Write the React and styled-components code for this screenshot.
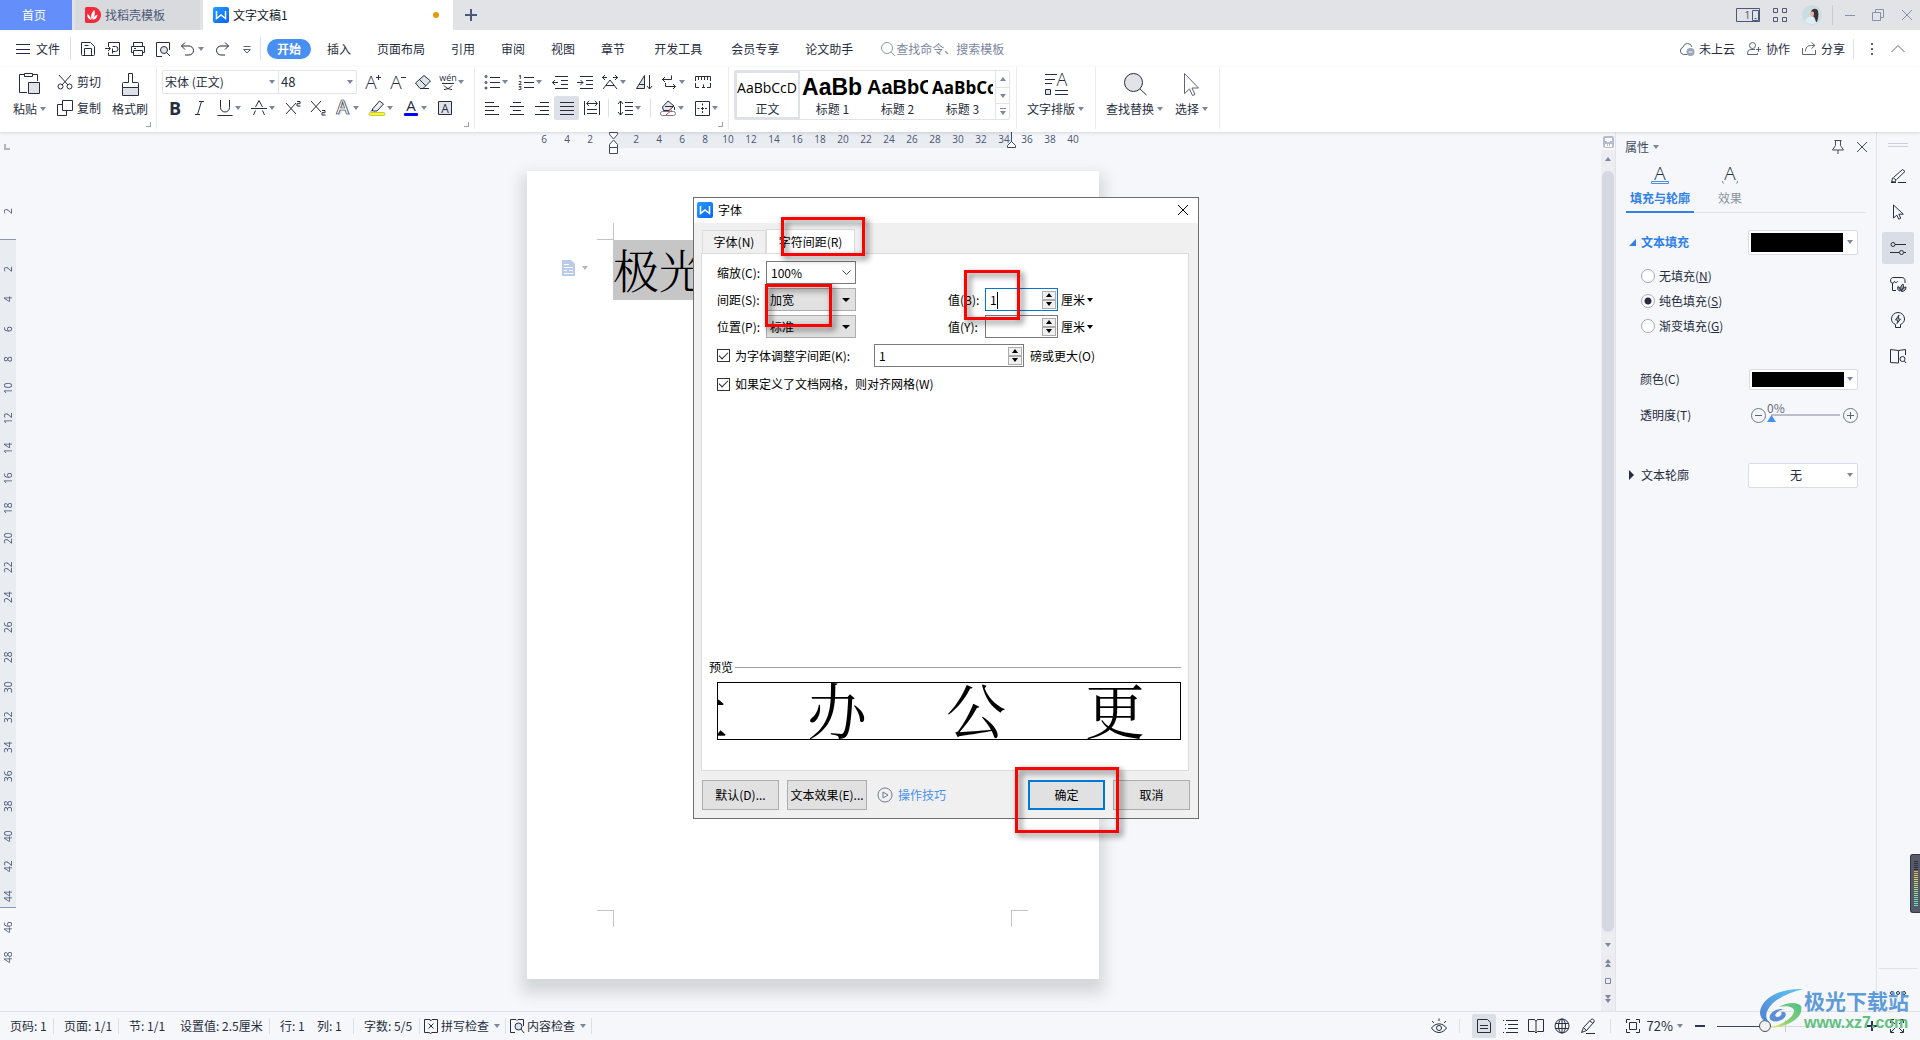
import { useState } from "react";
import styled, { createGlobalStyle, css } from "styled-components";

const FONT = '"Noto Sans CJK SC", "Noto Sans", sans-serif';
const INK = "#262d40";
const LINE = "#e1e3e9";
const BLUE = "#2f80e7";

const GlobalStyle = createGlobalStyle`
  * { box-sizing: border-box; }
  body {
    margin: 0;
    overflow: hidden;
    font: 12px/16px ${FONT};
    color: ${INK};
    background: #f5f7fa;
  }
  button, input, select {
    font: inherit;
    color: inherit;
    margin: 0;
    padding: 0;
    border: 0;
    outline: 0;
    background: none;
    border-radius: 0;
  }
  select { appearance: none; }
  button { white-space: nowrap; cursor: pointer; }
  svg { display: block; flex: none; overflow: visible; }
`;

/* ---------- icons ---------- */

const A = ({ x = 8, y = 13, size = 16, weight = 300, children = "A", ...rest }) => (
  <text x={x} y={y} fontSize={size} fontWeight={weight} fontFamily="Open Sans, Noto Sans, sans-serif" textAnchor="middle" fill="currentColor" stroke="none" {...rest}>
    {children}
  </text>
);

const icons = {
  menu: <path d="M1 3.500h14M1 8.500h14M1 12.500h14" />,
  save: <path d="M1.500 13.500v-12h9l4 4v8a1 1 0 0 1-1 1h-11a1 1 0 0 1-1-1zM4.500 14.500v-7h7v7M4.500 4.500h4" />,
  pdf: <path d="M3.500 5v-3.500h11v13h-11v-3M0 7.500h5M3 5l2.500 2.500L3 10M7.500 12.500v-5M7.500 10.500h3a2.500 2.500 0 0 0 0-5h-3" />,
  print: <path d="M3.500 5.500v-4h9v4M3.500 11.500h-2v-6h13v6h-2M3.500 9.500h9v5h-9zM4 7.500h2" />,
  preview: (
    <>
      <path d="M7 15.500H1.500v-14h13V9" />
      <circle cx="9" cy="9" r="3.500" fill="#dfe2e8" />
      <path d="M11.500 11.500l3.500 3.500" />
    </>
  ),
  undo: <path d="M5 1.500L1.500 5 5 8.500M1.500 5h7.500a4.500 4.500 0 0 1 0 9H5" />,
  redo: <path d="M11 1.500L14.500 5 11 8.500M14.500 5H7a4.500 4.500 0 0 0 0 9h4" />,
  more: <path d="M4.500 5.500h7M4.500 8.500L8 12l3.500-3.500z" stroke="#5d6476" />,
  search: (
    <g stroke="#8d97ab">
      <circle cx="7" cy="7" r="5.500" />
      <path d="M11 11l4 4" />
    </g>
  ),
  cloud: (
    <>
      <path d="M8 13.500H4.500a3.700 3.700 0 0 1-.5-7.200 4.600 4.600 0 0 1 9-.3" stroke="#5d6476" />
      <circle cx="11.500" cy="11" r="4" fill="#9aa4b8" stroke="none" />
      <path d="M9.500 11h4" stroke="#fff" />
    </>
  ),
  user: (
    <g stroke="#5d6476">
      <circle cx="6.500" cy="4.500" r="3" />
      <path d="M9 8.500H5a3.500 3.500 0 0 0-3.500 3.500v1.500h10V12M10 8.500h5M12.500 6v5" />
    </g>
  ),
  share: <path d="M1.500 7v6.500h13V9M4.500 10.500c0-4 2-6 6-6h3M10.500 1.500l3.500 3-3.500 3" stroke="#5d6476" />,
  dots: <path d="M8 2v2M8 7v2M8 12v2" strokeWidth="2" stroke="#5d6476" />,
  chevronUp: <path d="M1.500 11L8 4.500l6.500 6.500" stroke="#5d6476" />,
  paste: (
    <>
      <path d="M6 2.500H1.500v18H9M15 2.500h4.500V9" />
      <path d="M6.500 1.500h8v3h-8z" />
      <path d="M10.500 10.500h11v11h-11z" fill="#e1e3e8" />
    </>
  ),
  cut: (
    <>
      <path d="M2 1l9 10M14 1L5 11" />
      <circle cx="3.500" cy="12.500" r="2.500" />
      <circle cx="12.500" cy="12.500" r="2.500" />
    </>
  ),
  copy: <path d="M5.500 .5h10v10h-10zM5.500 4.500h-5v11h9v-5" />,
  brush: (
    <>
      <path d="M10.500 1.500h4v9h5a1 1 0 0 1 1 1v4h-16v-4a1 1 0 0 1 1-1h5z" fill="#fff" />
      <path d="M4.500 15.500h16v8h-16z" fill="#dfe1e6" />
    </>
  ),
  fontUp: (
    <>
      <A x={6} y={15} size={19} />
      <path d="M11 3.500h5M13.500 1v5" />
    </>
  ),
  fontDown: (
    <>
      <A x={6} y={15} size={19} />
      <path d="M11 3.500h5" />
    </>
  ),
  eraser: <path d="M.5 9L9 1.500 15.500 7 8 14.500H5zM4.500 5.500L11 12M5 14.500h9" fill="#dfe2e7" />,
  wen: (
    <>
      <A x={8} y={7} size={9} weight={400}>wén</A>
      <path d="M2 9.500h12M4 11.500c2 3 6 4 8 4M12 11.500c-2 3-6 4-8 4" />
    </>
  ),
  bold: <A size={18} y={15} weight={700}>B</A>,
  italic: <path d="M7 1.500h5M3 14.500h5M9.500 1.500l-4 13" />,
  underline: <path d="M3.500 0v7.500a4.500 4.500 0 0 0 9 0V0M.5 15.500h15" />,
  strike: <path d="M4.500 7L8 .5l3.500 6.500M2.500 15l2-4.500M13.500 15l-2-4.500M0 8.500h16" />,
  sup: <path d="M1 3l10 11M11 3L1 14M12 1.500h3v2.200h-3v2.300h3.500" />,
  sub: <path d="M1 1l10 11M11 1L1 12M12 10.500h3v2.200h-3v2.300h3.500" />,
  effect: (
    <>
      <A y={15} x={9} size={19} weight={600} fill="#d4d7de" />
      <A y={14} x={7.500} size={19} weight={600} fill="#fff" stroke="currentColor" strokeWidth=".7" />
    </>
  ),
  highlight: (
    <>
      <path d="M3.500 9L10.500 1l4 3-6.500 7H3.500zM2 11.500L4 9" fill="#eceef2" />
      <rect x="0" y="12.500" width="16" height="3" rx="1.500" fill="#ffff00" stroke="#8a8a4a" strokeWidth=".5" />
    </>
  ),
  fontColor: (
    <>
      <A y={11} size={15} weight={400} />
      <rect x="1" y="13" width="14" height="3" rx="1" fill="#0000ff" stroke="none" />
    </>
  ),
  shade: (
    <>
      <path d="M1.500 1.500h13v13h-13z" fill="#dfe2e7" />
      <A y={12.500} size={12} weight={400} />
    </>
  ),
  bullets: (
    <>
      <path d="M6 3.500h10M6 8.500h10M6 13.500h10" />
      <circle cx="2" cy="2.500" r="1" />
      <circle cx="2" cy="8.500" r="1" />
      <circle cx="2" cy="14" r="1" />
    </>
  ),
  numbers: (
    <>
      <path d="M6 3.500h10M6 8.500h10M6 13.500h10" />
      <A x={2} y={5} size={6} weight={700}>1</A>
      <A x={2} y={11} size={6} weight={700}>2</A>
      <A x={2} y={16} size={6} weight={700}>3</A>
    </>
  ),
  outdent: <path d="M3 2.500h13M9 6.500h7M9 10.500h7M3 14.500h13M0 8.500h6M3 6L.5 8.500 3 11" />,
  indent: <path d="M3 2.500h13M9 6.500h7M9 10.500h7M3 14.500h13M0 8.500h6M3.500 6L6 8.500 3.500 11" />,
  textWidth: <path d="M1 15L8 6l7 9M4 11.500h8M0 3.500h5M11 3.500h5M3 1L.5 3.500 3 6M13 1l2.500 2.500L13 6" />,
  sort: (
    <>
      <path d="M.5 14.500L8.500 1.500v13zM3 10.500h5.500" fill="#dfe2e7" />
      <path d="M13.500 1v14M11 12l2.500 3L16 12" />
    </>
  ),
  wrap: <path d="M10.500 1.500v4H1M4 3L1.500 5.500 4 8M4.500 9v3.500h10M12 10l2.500 2.500L12 15" />,
  tabRuler: <path d="M.5 7V2.500h15V7M3.500 3v3M6.500 3v3M9.500 3v3M12.500 3v3M.5 9v4.500H4M15.500 9v4.500H12M7 13.500h3M8.500 10.500v3" />,
  left: <path d="M1 2.500h9M1 6.500h14M1 10.500h9M1 14.500h14" />,
  center: <path d="M4 2.500h8M1 6.500h14M4 10.500h8M1 14.500h14" />,
  right: <path d="M6 2.500h9M1 6.500h14M6 10.500h9M1 14.500h14" />,
  justify: <path d="M1 2.500h14M1 6.500h14M1 10.500h14M1 14.500h14" />,
  distribute: <path d="M.5 1v14M15.500 1v14M3 3.500h10M5 1L2.500 3.500 5 6M11 1l2.500 2.500L11 6M3 9.500h10M3 13.500h10" />,
  spacing: <path d="M8 2.500h8M8 6.500h8M8 10.500h8M8 14.500h8M3.500 1v14M1 4l2.500-3L6 4M1 12l2.500 3L6 12" />,
  fill: (
    <>
      <path d="M2.500 7L8 1l6 5-5 4.500H3.500zM5 6.500h8" fill="#e4e6ea" />
      <path d="M14.500 7v3" />
      <path d="M.5 14a2 2 0 0 1 2-2.500h11a2 2 0 0 1 0 4h-11a2 2 0 0 1-2-1.500z" stroke="#777c88" />
      <path d="M6 15l6-5" stroke="#e04848" />
    </>
  ),
  border: <path d="M1.500 1.500h14v14h-14zM8.500 3.500v2M8.500 7v3M8.500 11v2M3.500 8.500h2M7 8.500h3M11 8.500h2" />,
  layout: (
    <>
      <path d="M1 2.500h12M1 7.500h10M1 11.500h7M11 18.500h13M11 22.500h13" />
      <path d="M1.500 17.500h5v5h-5z" fill="#e4e6ea" />
      <A x={18} y={14} size={18} />
    </>
  ),
  find: (
    <>
      <circle cx="10.500" cy="10.500" r="9" fill="#e1e3e6" />
      <path d="M17 17l6.500 6" />
    </>
  ),
  pointer: <path d="M4.500 1.500v20l5-4.500 3 6.500 2.500-1-3-6.500h6.500z" stroke="#5d6476" />,
  cursor: <path d="M3.500 1v13l3.300-2.800 2 4 2-1-2-4h4.500z" />,
  screens: (
    <>
      <path d="M.5 1.500h23v13H.5zM16.500 3.500v10h6v-10z" />
      <A x={11.500} y={12} size={11} weight={400}>1</A>
      <path d="M18.500 11.500h2" />
    </>
  ),
  grid: <path d="M1.500 1.500h4v4h-4zM10.500 1.500h4v4h-4zM1.500 10.500h4v4h-4zM10.500 10.500h4v4h-4z" />,
  min: <path d="M3 8.500h10" />,
  restore: <path d="M2.500 5.500h8v8h-8zM5.500 5.500v-3h8v8h-3" />,
  close: <path d="M3 3l10 10M13 3L3 13" />,
  pin: <path d="M4.500 1.500h7M5.500 1.500v5l-3 4.500h11l-3-4.500v-5M8 11v4" />,
  fillTab: (
    <>
      <A y={14} x={9} size={19} />
      <path d="M.5 15.500h17v2h-17z" stroke="#4a90e2" />
    </>
  ),
  effectTab: (
    <>
      <A y={14} x={9} size={19} />
      <path d="M1.500 15v1l1 1.500M16.500 15v1l-1 1.500" stroke="#4a90e2" />
    </>
  ),
  pen: <path d="M1.500 13.500l1.500-4 3 2.500-1 2zM4 9l8.500-7.500 2.500 2L6.500 11.500M8 14.500h8M1 14.500h5" />,
  edit: <path d="M1.500 14.500l2-5L11 1.500a2 2 0 0 1 3 2.500L6.500 12.500zM3.500 9.500l3 3M10 3l3 2.500M6 15.500h9" />,
  settings: (
    <>
      <path d="M5 4.500h11M0 12.500h9M14 12.500h2" />
      <circle cx="3" cy="4.500" r="2" />
      <circle cx="11.500" cy="12.500" r="2" />
    </>
  ),
  store: (
    <>
      <path d="M2.500 7v7.500H6M2.500 7a2 2 0 0 1-2-2C.5 2.500 1.500 1.500 4 1.500h7c3 0 4 1 4 3.500v2M2.500 7c1.500 0 2-1 2-2 0 2 3 2 3 0" />
      <path d="M10 15c-2-.5-3-2-2-4.500 1.500.5 2.500 2 2 4.500zM11 15c-1-3 0-6 2-7 1 2 .5 5-2 7zM11.500 15.500c0-3 2-4 4.500-4.500 0 3-2 4.500-4.500 4.500z" fill={INK} fillOpacity=".35" />
    </>
  ),
  bulb: <path d="M5.500 12.500c-2.500-1-4-3-4-5.500a6.500 6.500 0 0 1 13 0c0 2.500-1.500 4.500-4 5.500v3h-5zM9 3L5.500 8H8l-1 3.500L10.500 7H8z" />,
  bookSearch: (
    <>
      <path d="M8.500 2.500L.5 1.500v13l8 .5V2.500l7-1V7" />
      <circle cx="12.500" cy="11" r="2.500" />
      <path d="M14.500 13l1.500 2" />
    </>
  ),
  spell: <path d="M7 1.500H1.500v13H6l1.500 1 1.500-1h5.500v-13H9L7.500 3zM5.500 5.500l5 5M10.500 5.500l-5 5" />,
  content: (
    <>
      <path d="M6 14.500H1.500v-13H7l1 1 1-1h5.500V8" />
      <circle cx="9.500" cy="8.500" r="3.500" fill="#dfe2e8" />
      <path d="M12 11l3 4" />
    </>
  ),
  eye: (
    <>
      <path d="M.5 10c4-5.500 11-5.500 15 0-4 6-11 6-15 0zM1 3l2 2M8 .5V3M15 3l-2 2" />
      <circle cx="8" cy="10" r="2.500" />
    </>
  ),
  pageView: <path d="M1.500 1.500h10l3 3v10h-13zM4 7.500h8M4 10.500h8" />,
  outline: <path d="M4 2.500h12M6 6.500h10M6 10.500h10M4 14.500h12M1 2.500h1M3 6.500h1M3 10.500h1M1 14.500h1" />,
  book: <path d="M8 3.500l-1.500-2h-6v12h6l1.500 1.500 1.500-1.500h6v-12h-6zM8 3.500V15" />,
  globe: (
    <>
      <circle cx="8" cy="8" r="7" />
      <ellipse cx="8" cy="8" rx="3.500" ry="7" />
      <path d="M8 1v14M1.500 5.500h13M1.500 10.500h13" />
    </>
  ),
  fit: <path d="M1.500 5V1.500H5M11 1.500h3.500V5M14.500 11v3.500H11M5 14.500H1.500V11M4.500 4.500h7v7h-7z" />,
  full: <path d="M1.500 5V1.500H5M11 1.500h3.500V5M14.500 11v3.500H11M5 14.500H1.500V11M2 2l4 4M14 2l-4 4M14 14l-4-4M2 14l4-4" />,
  moreDots: (
    <>
      <circle cx="2" cy="8" r="1.500" />
      <circle cx="8" cy="8" r="1.500" />
      <circle cx="14" cy="8" r="1.500" />
    </>
  ),
  play: <path d="M8 1a7 7 0 1 0 .01 0zM6 5v6l5-3z" />,
  rulerToggle: (
    <>
      <rect x="0" y="0" width="11" height="12" rx="2" fill="#b4bccd" stroke="none" />
      <path d="M2 2h7v3H7v1H4V5H2zM2 8h2v2h1V8h1v2h1V8h2v3H2z" fill="#fff" stroke="none" />
    </>
  ),
};

const Icon = ({ name, w = 16, h = 16, color }) => (
  <svg width={w} height={h} viewBox={`0 0 ${w} ${h}`} fill="none" stroke="currentColor" color={color} aria-hidden="true">
    {icons[name]}
  </svg>
);

const Caret = ({ color = "#7c86a0", up }) => (
  <svg width="6" height="4" viewBox="0 0 6 4" fill={color} aria-hidden="true">
    <path d={up ? "M0 4h6L3 0z" : "M0 0h6L3 4z"} />
  </svg>
);

const WpsLogo = () => (
  <svg width="16" height="16" viewBox="0 0 16 16" aria-hidden="true">
    <defs>
      <linearGradient id="wps" x1="0" y1="0" x2="1" y2="1">
        <stop offset="0" stopColor="#22a0ff" />
        <stop offset="1" stopColor="#0a62f5" />
      </linearGradient>
    </defs>
    <rect width="16" height="16" rx="2" fill="url(#wps)" />
    <path d="M3.500 4v7.500L8 8l4.500 3.500V4" fill="none" stroke="#fff" strokeWidth="1.500" />
  </svg>
);

const DocerLogo = () => (
  <svg width="16" height="16" viewBox="0 0 16 16" aria-hidden="true">
    <path d="M1.500 0H8a8 8 0 0 1 0 16H1.500A1.500 1.500 0 0 1 0 14.500v-13A1.500 1.500 0 0 1 1.500 0z" fill="#f5293a" />
    <path d="M6 13C2.500 11.500 2 9 2.500 7c2 1 3.300 3 3.500 6zM6.500 12.500c-1-4 .3-7.500 3-9.500 1 4 0 7.500-3 9.500zM7.500 13c.5-2.500 2-4.500 5-5.500 0 3-2 5-5 5.500z" fill="#fff" />
  </svg>
);

/* ---------- frame ---------- */

const Screen = styled.div`
  position: relative;
  display: flex;
  flex-direction: column;
  height: 100vh;
`;

const TitleBar = styled.header`
  display: flex;
  align-items: center;
  height: 30px;
  background: #e1e3e6;
  color: #4c5876;
`;

const DocTab = styled.button`
  display: flex;
  align-items: center;
  gap: 4px;
  width: ${(p) => p.$w}px;
  height: 30px;
  margin-right: 3px;
  padding: 0 14px 0 10px;
  background: ${(p) => p.$bg};
  color: ${(p) => p.$color};
  ${(p) => p.$center && css`justify-content: center; padding: 0 4px 0 0;`}
`;

const Dot = styled.span`
  width: 6px;
  height: 6px;
  margin-left: auto;
  border-radius: 50%;
  background: #e69a05;
`;

const PlusButton = styled.button`
  width: 30px;
  height: 30px;
  display: grid;
  place-items: center;
`;

const WindowTools = styled.div`
  display: flex;
  align-items: center;
  margin-left: auto;
`;

const WinButton = styled.button`
  display: grid;
  place-items: center;
  width: ${(p) => p.$w || 30}px;
  height: 30px;
`;

const VSep = styled.span`
  flex: none;
  width: 1px;
  height: ${(p) => p.$h || 20}px;
  margin: 0 ${(p) => p.$r ?? 0}px 0 ${(p) => p.$l ?? 0}px;
  background: ${(p) => p.$color || "#dcdfe5"};
`;

const MenuBar = styled.nav`
  display: flex;
  align-items: center;
  height: 37px;
  padding-left: 15px;
  background: #fff;
`;

const FileButton = styled.button`
  display: flex;
  align-items: center;
  gap: 5px;
`;

const MenuTab = styled.button`
  height: 20px;
  margin-right: 6px;
  padding: 0 ${(p) => p.$pad || 10}px;
  border-radius: 10px;
  ${(p) =>
    p.$active &&
    css`
      background: #478ff2;
      color: #fff;
      font-weight: 700;
    `}
`;

const SearchBox = styled.label`
  display: flex;
  align-items: center;
  margin-left: 11px;
  input { width: 120px; }
  input::placeholder { color: #7b869f; opacity: 1; }
`;

const MenuRight = styled.div`
  display: flex;
  align-items: center;
  margin-left: auto;
  padding-right: 14px;
`;

const CloudButton = styled.button`
  display: flex;
  align-items: center;
  gap: 4px;
  margin-right: ${(p) => p.$r || 11}px;
`;

const MenuDots = styled.button`
  margin: 0 10px;
`;

/* ---------- ribbon ---------- */

const Ribbon = styled.section`
  position: relative;
  z-index: 1;
  display: flex;
  height: 65px;
  background: #fff;
  box-shadow: 0 1px 3px rgba(40, 50, 70, 0.16);
`;

const Group = styled.div`
  position: relative;
  display: flex;
  gap: ${(p) => p.$gap || 0}px;
  height: 62px;
  padding: 3px ${(p) => p.$r ?? 5}px 0 ${(p) => p.$l ?? 5}px;
  border-right: 1px solid #ebecef;
`;

const Launcher = styled.span`
  position: absolute;
  right: 5px;
  bottom: 2px;
  width: 5px;
  height: 5px;
  border: solid #9aa3b5;
  border-width: 0 1px 1px 0;
`;

const Stack = styled.div`
  display: flex;
  flex-direction: column;
  gap: 2px;
`;

const Row = styled.div`
  display: flex;
  align-items: center;
  height: 24px;
`;

const ToolButton = styled.button`
  display: flex;
  align-items: center;
  width: ${(p) => (p.$caret ? 34 : 25)}px;
  height: 24px;
  padding-left: 5px;
  gap: 2px;
  border-radius: 2px;
  background: ${(p) => (p.$active ? "#dde1e7" : "none")};
`;

const LabelTool = styled.button`
  display: flex;
  align-items: center;
  gap: 4px;
  height: 24px;
`;

const BigTool = styled.button`
  display: flex;
  flex-direction: column;
  align-items: center;
  gap: 5px;
  padding-top: 2px;
  height: 52px;
  span { display: flex; align-items: center; gap: 3px; }
`;

const ComboPair = styled.div`
  display: flex;
  height: 24px;
  margin-right: 3px;
  border: 1px solid ${LINE};
  border-radius: 2px;
`;

const Combo = styled.span`
  display: grid;
  align-items: center;
  width: ${(p) => p.$w}px;
  & + & { border-left: 1px solid ${LINE}; }
  select {
    grid-area: 1 / 1;
    width: 100%;
    height: 22px;
    padding-left: 2px;
    font-size: ${(p) => p.$size || 12}px;
  }
  svg {
    grid-area: 1 / 1;
    justify-self: end;
    margin-right: 3px;
    pointer-events: none;
  }
`;

const StyleBox = styled.div`
  display: flex;
  height: 50px;
  border: 1px solid ${LINE};
  border-radius: 2px;
`;

const StyleCard = styled.button`
  display: flex;
  flex-direction: column;
  align-items: center;
  justify-content: space-between;
  width: 65px;
  padding: 2px;
  overflow: hidden;
  box-shadow: ${(p) => (p.$active ? "inset 0 0 0 2px #dfe1e8" : "none")};
  b {
    width: 100%;
    height: 29px;
    overflow: hidden;
    text-align: left;
    font: ${(p) => p.$bold} ${(p) => p.$size}px/29px ${(p) => p.$face}, sans-serif;
    color: #000;
  }
`;

const StyleScroll = styled.div`
  display: grid;
  grid-template-rows: 1fr 1fr 1fr;
  width: 14px;
  border-left: 1px solid ${LINE};
  button { display: grid; place-items: center; }
  button + button { border-top: 1px solid ${LINE}; }
`;

const Tool = ({ icon, caret, active }) => (
  <ToolButton type="button" aria-label={icon} $caret={caret} $active={active}>
    <Icon name={icon} />
    {caret && <Caret />}
  </ToolButton>
);

const ToolRow = ({ tools }) => tools.map((t) => <Tool key={t.icon} {...t} />);

/* ---------- work area ---------- */

const Work = styled.main`
  display: flex;
  flex: 1;
  min-height: 0;
`;

const SideRuler = styled.div`
  display: flex;
  flex-direction: column;
  width: 16px;
  font: 10px/16px "Open Sans", sans-serif;
  color: #4a5573;
`;

const RulerTop = styled.div`
  display: flex;
  flex-direction: column;
  justify-content: space-between;
  height: 107px;
  padding: 12px 0 20px;
`;

const TabMark = styled.span`
  width: 6px;
  height: 6px;
  margin-left: 4px;
  border: solid #b1b5c4;
  border-width: 0 0 2px 2px;
`;

const RulerLit = styled.div`
  display: flex;
  flex: 1;
  flex-direction: column;
  justify-content: space-between;
  padding: 21px 0 3px;
  background: #e9ecf1;
  border: solid #8c9ab3;
  border-width: 1px 0;
`;

const RulerEnd = styled.div`
  display: flex;
  flex-direction: column;
  gap: 14px;
  height: 103px;
  padding-top: 11px;
`;

const Turned = styled.span`
  width: 16px;
  height: 16px;
  writing-mode: vertical-rl;
  transform: rotate(180deg);
  text-align: center;
`;

const Canvas = styled.div`
  display: flex;
  flex: 1;
  flex-direction: column;
  align-items: center;
`;

const TopRuler = styled.div`
  display: flex;
  height: 16px;
  background: linear-gradient(90deg, transparent 81px, #e9ecf1 81px, #e9ecf1 479px, transparent 479px);
  font: 10px/15px "Open Sans", sans-serif;
  color: #4a5573;
  span { width: 23px; text-align: center; }
  span > svg { margin: 0 auto; }
`;

const RightMark = styled.svg`
  position: absolute;
  margin-left: 471px;
`;

const Paper = styled.article`
  position: relative;
  flex: 1;
  width: 572px;
  margin: 23px 0 32px 9px;
  padding: 69px 86px;
  background: #fff;
  box-shadow: 0 9px 14px 5px rgba(60, 64, 72, 0.18);
  p {
    margin: 0;
    font: 300 46px/56px "Noto Serif CJK SC", ${FONT};
    color: #000;
  }
  mark { display: inline-block; height: 60px; background: #c6c6c6; color: inherit; }
`;

const Crop = styled.i`
  position: absolute;
  width: 17px;
  height: 17px;
  border: 0 solid #c4c4c4;
  ${(p) => p.$at}
`;

const ParaHandle = styled.span`
  position: absolute;
  left: 35px;
  top: 89px;
  display: flex;
  align-items: center;
  gap: 7px;
`;

const ScrollBar = styled.div`
  display: flex;
  flex-direction: column;
  align-items: center;
  width: 15px;
  padding: 4px 0 3px;
  background: linear-gradient(#f5f7fa 18px, #ececf1 18px);
  border-right: 1px solid ${LINE};
  button {
    display: grid;
    place-items: center;
    align-content: center;
    width: 14px;
    height: 18px;
  }
`;

const Thumb = styled.div`
  flex: 1;
  width: 12px;
  margin: 3px 0 4px;
  border-radius: 6px;
  background: #d5d8e0;
`;

/* ---------- properties ---------- */

const Panel = styled.aside`
  display: flex;
  flex-direction: column;
  width: 260px;
  padding: 0 10px 0 9px;
`;

const PanelHead = styled.div`
  display: flex;
  align-items: center;
  gap: 8px;
  height: 30px;
  margin-right: -4px;
  color: #414a60;
`;

const PanelTitle = styled.button`
  display: flex;
  align-items: center;
  gap: 4px;
  margin-right: auto;
`;

const PanelTabs = styled.div`
  display: flex;
  height: 51px;
  border-bottom: 1px solid ${LINE};
  margin: 0 0 17px 1px;
`;

const PanelTab = styled.button`
  display: flex;
  flex-direction: column;
  align-items: center;
  gap: 6px;
  width: ${(p) => (p.$active ? 68 : 72)}px;
  height: 51px;
  padding-top: 4px;
  color: ${(p) => (p.$active ? BLUE : "#8b93a0")};
  font-weight: ${(p) => (p.$active ? 700 : 400)};
  border-bottom: 2px solid ${(p) => (p.$active ? BLUE : "transparent")};
`;

const PanelRow = styled.div`
  display: flex;
  align-items: center;
  justify-content: space-between;
  height: 24px;
  margin-top: ${(p) => p.$mt || 0}px;
  padding: 0 8px 0 ${(p) => p.$l || 4}px;
`;

const Fold = styled.button`
  display: flex;
  align-items: center;
  gap: 5px;
  color: ${(p) => (p.$open ? BLUE : INK)};
  font-weight: ${(p) => (p.$open ? 700 : 400)};
`;

const Swatch = styled.button`
  display: flex;
  align-items: center;
  justify-content: space-between;
  width: ${(p) => p.$w}px;
  height: ${(p) => p.$h}px;
  padding: 2px 4px 2px 2px;
  background: #fff;
  border: 1px solid #d8dce4;
  border-radius: 2px;
  i { width: 92px; height: 100%; background: #000; }
`;

const Picker = styled.span`
  display: grid;
  align-items: center;
  width: 110px;
  height: 25px;
  background: #fff;
  border: 1px solid #d8dce4;
  border-radius: 2px;
  select { grid-area: 1 / 1; height: 23px; padding-left: 41px; }
  svg { grid-area: 1 / 1; justify-self: end; margin-right: 4px; pointer-events: none; }
`;

const RadioList = styled.div`
  padding-top: 9px;
`;

const Radio = styled.label`
  display: flex;
  align-items: center;
  gap: 4px;
  height: 25px;
  padding-left: 16px;
  input {
    appearance: none;
    width: 14px;
    height: 14px;
    border: 1px solid #a6a9b3;
    border-radius: 50%;
    background: #fff;
  }
  input:checked { background: radial-gradient(${INK} 3px, #fff 4px); }
`;

const Opacity = styled.div`
  display: grid;
  grid-template-columns: 15px 77px 15px;
  align-items: center;
  output { grid-column: 2; grid-row: 1; padding: 0 0 14px 1px; color: #666d7a; line-height: 12px; }
  input {
    grid-column: 2;
    grid-row: 1;
    appearance: none;
    height: 2px;
    margin: 0 3px 0 5px;
    background: #bbbec8;
  }
  input::-webkit-slider-thumb {
    appearance: none;
    width: 9px;
    height: 7px;
    margin-top: 7px;
    margin-left: -4px;
    background: #478ff2;
    clip-path: polygon(50% 0, 100% 100%, 0 100%);
  }
`;

const Round = styled.button`
  grid-row: 1;
  width: 15px;
  height: 15px;
  border: 1px solid #6f788c;
  border-radius: 50%;
  display: grid;
  place-items: center;
`;

const Strip = styled.aside`
  display: flex;
  flex-direction: column;
  align-items: center;
  gap: 4px;
  width: 44px;
  padding: 11px 1px 0 0;
  border-left: 1px solid ${LINE};
`;

const Grip = styled.span`
  width: 20px;
  height: 4px;
  margin-bottom: 9px;
  border: solid #ccd0d8;
  border-width: 1px 0;
`;

const StripButton = styled.button`
  display: grid;
  place-items: center;
  width: 32px;
  height: 32px;
  border-radius: 2px;
  background: ${(p) => (p.$active ? "#d9dde5" : "none")};
`;

const StripEnd = styled.div`
  display: grid;
  justify-items: center;
  width: 38px;
  height: 43px;
  margin-top: auto;
  padding-top: 16px;
  border-top: 1px solid ${LINE};
`;

/* ---------- status bar ---------- */

const StatusBar = styled.footer`
  display: flex;
  align-items: center;
  height: 29px;
  border-top: 1px solid #dfe2e8;
  background: #f5f7fa;
`;

const StatusCell = styled.span`
  width: ${(p) => p.$w}px;
  height: 16px;
  padding-left: 10px;
  white-space: nowrap;
  border-right: ${(p) => (p.$line ? 1 : 0)}px solid #dcdfe6;
`;

const StatusButton = styled.button`
  display: flex;
  align-items: center;
  width: 86px;
  height: 16px;
  padding: 0 5px 0 3px;
  gap: 2px;
  border-right: 1px solid #dcdfe6;
  svg:last-child { margin-left: auto; }
`;

const StatusRight = styled.div`
  display: flex;
  align-items: center;
  margin-left: auto;
  padding-right: 15px;
`;

const Views = styled.div`
  display: flex;
  gap: 2px;
  button {
    display: grid;
    place-items: center;
    width: 24px;
    height: 24px;
    border-radius: 2px;
  }
  button:first-child { background: #dbe0e6; }
`;

const ZoomSelect = styled.button`
  display: flex;
  align-items: center;
  gap: 4px;
  margin: 0 12px 0 6px;
  font-size: 13px;
`;

const ZoomRange = styled.input`
  appearance: none;
  width: 143px;
  height: 12px;
  margin: 0 7px 0 12px;
  background:
    linear-gradient(#c8ccd6, #c8ccd6) 68px 0 / 1px 12px no-repeat,
    linear-gradient(90deg, #3b445c 48px, #d5d8df 48px) 0 6px / 100% 1px no-repeat;
  &::-webkit-slider-thumb {
    appearance: none;
    width: 12px;
    height: 12px;
    border: 1px solid #4a4f5c;
    border-radius: 50%;
    background: #f1f1f2;
  }
`;

const FullButton = styled.button`
  margin-left: 12px;
`;

/* ---------- font dialog ---------- */

const Dialog = styled.div`
  position: absolute;
  z-index: 2;
  left: 693px;
  top: 197px;
  display: flex;
  flex-direction: column;
  width: 506px;
  height: 622px;
  background: #f0f0f0;
  border: 1px solid #6e6e6e;
  color: #000;
`;

const DialogTitle = styled.div`
  display: flex;
  align-items: center;
  gap: 5px;
  height: 25px;
  padding: 0 7px 1px 3px;
  background: #fff;
  button { margin-left: auto; }
`;

const DialogTabs = styled.div`
  display: flex;
  align-items: flex-end;
  height: 30px;
  padding-left: 8px;
`;

const DialogTab = styled.button`
  width: ${(p) => (p.$active ? 89 : 64)}px;
  height: ${(p) => (p.$active ? 25 : 23)}px;
  margin-bottom: ${(p) => (p.$active ? -1 : 0)}px;
  padding-bottom: 1px;
  background: ${(p) => (p.$active ? "#fff" : "#f0f0f0")};
  border: 1px solid #dcdcdc;
  border-bottom: 0;
`;

const Sheet = styled.div`
  display: flex;
  flex: 1;
  flex-direction: column;
  margin: 0 9px 9px 7px;
  padding: 7px 7px 30px 15px;
  background: #fff;
  border: 1px solid #dcdcdc;
`;

const Field = styled.div`
  display: flex;
  align-items: center;
  height: 23px;
  margin-bottom: 4px;
  label:first-child { width: 49px; }
  label:not(:first-child) { width: 37px; margin-left: 92px; }
`;

const KernRow = styled.div`
  display: flex;
  align-items: center;
  margin: 2px 0 9px;
  label:last-child { margin-left: 6px; }
`;

const WinSelect = styled.span`
  display: grid;
  align-items: center;
  width: 90px;
  height: 23px;
  border: 1px solid ${(p) => (p.$plain ? "#7a7a7a" : "#adadad")};
  background: ${(p) => (p.$plain ? "#fff" : "#e1e1e1")};
  select { grid-area: 1 / 1; height: 21px; padding-left: ${(p) => (p.$plain ? 4 : 3)}px; }
  svg { grid-area: 1 / 1; justify-self: end; margin-right: ${(p) => (p.$plain ? 4 : 5)}px; pointer-events: none; }
`;

const SpinBox = styled.span`
  display: flex;
  align-items: center;
  width: ${(p) => p.$w}px;
  height: 23px;
  padding: 0 1px 0 4px;
  background: #fff;
  border: 1px solid ${(p) => (p.$focus ? "#0078d7" : "#7a7a7a")};
  input { flex: 1; min-width: 0; }
`;

const SpinKeys = styled.span`
  display: grid;
  width: 14px;
  button {
    display: grid;
    place-items: center;
    height: 9px;
    background: #f0f0f0;
    border: 1px solid #adadad;
  }
`;

const TextCaret = styled.i`
  position: absolute;
  left: 303px;
  top: 94px;
  width: 1px;
  height: 17px;
  background: #000;
`;

const Unit = styled.button`
  display: flex;
  align-items: center;
  gap: 2px;
  margin-left: 3px;
`;

const Check = styled.label`
  display: flex;
  align-items: center;
  gap: 5px;
  width: ${(p) => p.$w || "auto"};
  input {
    appearance: none;
    display: grid;
    place-items: center;
    width: 13px;
    height: 13px;
    border: 1px solid #333;
  }
  input:checked::after {
    content: "";
    width: 8px;
    height: 4px;
    margin-bottom: 3px;
    border: solid #222;
    border-width: 0 0 1px 1px;
    transform: rotate(-45deg);
  }
`;

const Legend = styled.div`
  display: flex;
  align-items: center;
  gap: 2px;
  margin: auto 0 7px -8px;
  &::after { content: ""; flex: 1; height: 1px; background: #a0a0a0; }
`;

const Preview = styled.div`
  display: flex;
  justify-content: flex-end;
  gap: 79px;
  height: 58px;
  padding-right: 35px;
  overflow: hidden;
  border: 1px solid #000;
  font: 400 60px/50px "Noto Serif CJK SC", ${FONT};
`;

const DialogFoot = styled.div`
  display: flex;
  align-items: center;
  gap: 8px;
  padding: 0 8px 8px 8px;
`;

const WinButtonBox = styled.button`
  width: ${(p) => p.$w || 77}px;
  height: 30px;
  background: #e1e1e1;
  border: ${(p) => (p.$main ? "2px solid #0078d7" : "1px solid #adadad")};
`;

const Tips = styled.a`
  display: flex;
  align-items: center;
  gap: 5px;
  margin: 0 auto 0 2px;
  color: #4a90f2;
  text-decoration: none;
`;

const RedBox = styled.div`
  position: absolute;
  z-index: 3;
  left: ${(p) => p.$x}px;
  top: ${(p) => p.$y}px;
  width: ${(p) => p.$w}px;
  height: ${(p) => p.$h}px;
  border: 3px solid #f90500;
  filter: drop-shadow(3px 3px 3px rgba(0, 0, 0, 0.6));
  pointer-events: none;
`;

/* ---------- things floating above the window ---------- */

const Meter = styled.div`
  position: absolute;
  right: 0;
  top: 854px;
  width: 10px;
  height: 59px;
  padding: 6px 2px 6px 3px;
  background: #565b69;
  border: 1px solid #343844;
  border-right: 0;
  border-radius: 3px 0 0 3px;
  i {
    display: block;
    height: 100%;
    background:
      repeating-linear-gradient(transparent 0 1px, #565b69 1px 2px),
      linear-gradient(#2f323c 22%, #e9a850 22%, #e6d35c 45%, #a5dd86 65%, #55e0cf);
  }
`;

const SiteMark = styled.div`
  position: absolute;
  z-index: 4;
  right: 11px;
  bottom: 6px;
  display: flex;
  gap: 1px;
  pointer-events: none;
  strong {
    display: block;
    font-size: 21px;
    line-height: 24px;
    color: #5f9bd8;
  }
  em {
    display: block;
    font: 700 16px/22px "Liberation Sans", sans-serif;
    color: #62c07f;
  }
`;

const range = (from, to) => Array.from({ length: (to - from) / 2 + 1 }, (_, i) => from + i * 2);

const fontRow = [
  { icon: "fontUp" },
  { icon: "fontDown" },
  { icon: "eraser" },
  { icon: "wen", caret: true },
];

const fontRow2 = [
  { icon: "bold" },
  { icon: "italic" },
  { icon: "underline", caret: true },
  { icon: "strike", caret: true },
  { icon: "sup" },
  { icon: "sub" },
  { icon: "effect", caret: true },
  { icon: "highlight", caret: true },
  { icon: "fontColor", caret: true },
  { icon: "shade" },
];

const paraRow = [
  { icon: "bullets", caret: true },
  { icon: "numbers", caret: true },
  { icon: "outdent" },
  { icon: "indent" },
  { icon: "textWidth", caret: true },
  { icon: "sort" },
  { icon: "wrap", caret: true },
  { icon: "tabRuler" },
];

const paraRow2 = [
  { icon: "left" },
  { icon: "center" },
  { icon: "right" },
  { icon: "justify", active: true },
  { icon: "distribute" },
];

const styleCards = [
  { name: "正文", sample: "AaBbCcD", size: 14, bold: 400, face: '"Open Sans"', active: true },
  { name: "标题 1", sample: "AaBb", size: 23, bold: 700, face: '"Liberation Sans"' },
  { name: "标题 2", sample: "AaBbC", size: 20, bold: 700, face: '"Liberation Sans"' },
  { name: "标题 3", sample: "AaBbCc", size: 17, bold: 700, face: '"Open Sans"' },
];

const quickTools = [
  { icon: "save" },
  { icon: "pdf" },
  { icon: "print" },
  { icon: "preview" },
  { icon: "undo", caret: true },
  { icon: "redo" },
  { icon: "more" },
];

const menuTabs = ["开始", "插入", "页面布局", "引用", "审阅", "视图", "章节", "开发工具", "会员专享", "论文助手"];

function Spin({ id, w, value, focus }) {
  const [text, setText] = useState(value);
  return (
    <SpinBox $w={w} $focus={focus}>
      <input id={id} value={text} onChange={(e) => setText(e.target.value)} />
      <SpinKeys>
        <button type="button" aria-label="增加"><Caret color="#000" up /></button>
        <button type="button" aria-label="减少"><Caret color="#000" /></button>
      </SpinKeys>
    </SpinBox>
  );
}

function FontDialog() {
  return (
    <Dialog role="dialog" aria-label="字体">
      <DialogTitle>
        <WpsLogo />
        字体
        <button type="button" aria-label="关闭"><Icon name="close" /></button>
      </DialogTitle>
      <DialogTabs>
        <DialogTab type="button">字体(N)</DialogTab>
        <DialogTab type="button" $active>字符间距(R)</DialogTab>
      </DialogTabs>
      <Sheet>
        <Field>
          <label htmlFor="scale">缩放(C):</label>
          <WinSelect $plain>
            <select id="scale"><option>100%</option></select>
            <svg width="9" height="6" viewBox="0 0 9 6" fill="none" stroke="#444"><path d="M.5 .5l4 4 4-4" /></svg>
          </WinSelect>
        </Field>
        <Field>
          <label htmlFor="spacing">间距(S):</label>
          <WinSelect>
            <select id="spacing"><option>加宽</option></select>
            <svg width="8" height="4" viewBox="0 0 8 4"><path d="M0 0h8L4 4z" /></svg>
          </WinSelect>
          <label htmlFor="by">值(B):</label>
          <Spin id="by" w={73} value="1" focus />
          <TextCaret />
          <Unit type="button">厘米<Caret color="#000" /></Unit>
        </Field>
        <Field>
          <label htmlFor="position">位置(P):</label>
          <WinSelect>
            <select id="position"><option>标准</option></select>
            <svg width="8" height="4" viewBox="0 0 8 4"><path d="M0 0h8L4 4z" /></svg>
          </WinSelect>
          <label htmlFor="py">值(Y):</label>
          <Spin id="py" w={73} value="" />
          <Unit type="button">厘米<Caret color="#000" /></Unit>
        </Field>
        <KernRow>
          <Check $w="157px"><input type="checkbox" defaultChecked />为字体调整字间距(K):</Check>
          <Spin id="kern" w={150} value="1" />
          <label htmlFor="kern">磅或更大(O)</label>
        </KernRow>
        <Check><input type="checkbox" defaultChecked />如果定义了文档网格，则对齐网格(W)</Check>
        <Legend>预览</Legend>
        <Preview>
          {[..."让办公更"].map((c) => <span key={c}>{c}</span>)}
        </Preview>
      </Sheet>
      <DialogFoot>
        <WinButtonBox type="button">默认(D)...</WinButtonBox>
        <WinButtonBox type="button" $w={80}>文本效果(E)...</WinButtonBox>
        <Tips href="#tips"><Icon name="play" color="#6f7a90" />操作技巧</Tips>
        <WinButtonBox type="button" $main>确定</WinButtonBox>
        <WinButtonBox type="button">取消</WinButtonBox>
      </DialogFoot>
    </Dialog>
  );
}

function Properties() {
  const [fill, setFill] = useState("S");
  const fills = [["N", "无填充"], ["S", "纯色填充"], ["G", "渐变填充"]];
  return (
    <Panel>
      <PanelHead>
        <PanelTitle type="button">属性<Caret /></PanelTitle>
        <button type="button" aria-label="固定"><Icon name="pin" /></button>
        <button type="button" aria-label="关闭"><Icon name="close" /></button>
      </PanelHead>
      <PanelTabs>
        <PanelTab type="button" $active><Icon name="fillTab" w={18} h={18} color={INK} />填充与轮廓</PanelTab>
        <PanelTab type="button"><Icon name="effectTab" w={18} h={18} color={INK} />效果</PanelTab>
      </PanelTabs>
      <PanelRow>
        <Fold type="button" $open>
          <svg width="7" height="7" viewBox="0 0 7 7" fill={BLUE}><path d="M7 0v7H0z" /></svg>
          文本填充
        </Fold>
        <Swatch type="button" aria-label="文本填充颜色" $w={110} $h={25}><i /><Caret /></Swatch>
      </PanelRow>
      <RadioList>
        {fills.map(([key, name]) => (
          <Radio key={key}>
            <input type="radio" name="fill" checked={fill === key} onChange={() => setFill(key)} />
            <span>{name}(<u>{key}</u>)</span>
          </Radio>
        ))}
      </RadioList>
      <PanelRow $mt={29} $l={15}>
        颜色(C)
        <Swatch type="button" aria-label="颜色" $w={109} $h={21}><i /><Caret /></Swatch>
      </PanelRow>
      <PanelRow $mt={12} $l={15}>
        <label htmlFor="alpha">透明度(T)</label>
        <Opacity>
          <Round type="button" aria-label="减"><svg width="7" height="7" stroke="#5d6476"><path d="M0 3.500h7" /></svg></Round>
          <output>0%</output>
          <input id="alpha" type="range" defaultValue="0" />
          <Round type="button" aria-label="加"><svg width="7" height="7" stroke="#5d6476"><path d="M0 3.500h7M3.500 0v7" /></svg></Round>
        </Opacity>
      </PanelRow>
      <PanelRow $mt={36}>
        <Fold type="button">
          <svg width="7" height="10" viewBox="0 0 7 10" fill={INK}><path d="M0 0l5 5-5 5z" /></svg>
          文本轮廓
        </Fold>
        <Picker>
          <select aria-label="文本轮廓"><option>无</option></select>
          <Caret />
        </Picker>
      </PanelRow>
    </Panel>
  );
}

function App() {
  return (
    <Screen>
      <GlobalStyle />
      <TitleBar>
        <DocTab type="button" $w={72} $bg="#648ffa" $color="#fff" $center>首页</DocTab>
        <DocTab type="button" $w={125} $bg="#d8dadd" $color="#4c5876"><DocerLogo />找稻壳模板</DocTab>
        <DocTab type="button" $w={250} $bg="#fff" $color="#101828"><WpsLogo />文字文稿1<Dot /></DocTab>
        <PlusButton type="button" aria-label="新建">
          <svg width="12" height="12" stroke="currentColor" strokeWidth="2"><path d="M0 6h12M6 0v12" /></svg>
        </PlusButton>
        <WindowTools>
          <WinButton type="button" aria-label="窗口"><Icon name="screens" w={24} /></WinButton>
          <WinButton type="button" aria-label="应用" $w={34}><Icon name="grid" /></WinButton>
          <WinButton type="button" aria-label="账户">
            <svg width="20" height="20" viewBox="0 0 20 20">
              <circle cx="10" cy="10" r="10" fill="#cbdde1" />
              <path d="M9 7c1-4 6-4 7-1 1 4 0 8-1 11-2 0-1-3-3-5-1-1-3-2-3-5z" fill="#3a2f38" />
              <path d="M8 8c1-2 4-2 4 0 0 3-1 4-2 4s-2-2-2-4z" fill="#e0b8a8" />
              <path d="M3 16c1-4 5-5 8-4l3 6c-4 2-9 1-11-2z" fill="#dfeef5" />
            </svg>
          </WinButton>
          <VSep $l={5} $r={5} $color="#c9ccd2" />
          <WinButton type="button" aria-label="最小化" $w={24}><Icon name="min" color="#8592ad" /></WinButton>
          <WinButton type="button" aria-label="还原" $w={32}><Icon name="restore" color="#8592ad" /></WinButton>
          <WinButton type="button" aria-label="关闭" $w={26}><Icon name="close" color="#8592ad" /></WinButton>
        </WindowTools>
      </TitleBar>

      <MenuBar>
        <FileButton type="button"><Icon name="menu" />文件</FileButton>
        <VSep $l={10} $r={4} $h={23} />
        <ToolRow tools={quickTools} />
        <VSep $l={1} $r={6} $h={23} />
        {menuTabs.map((t) => (
          <MenuTab key={t} type="button" $active={t === "开始"} $pad={t === "开发工具" ? 13 : 10}>{t}</MenuTab>
        ))}
        <SearchBox>
          <Icon name="search" />
          <input placeholder="查找命令、搜索模板" aria-label="查找命令、搜索模板" />
        </SearchBox>
        <MenuRight>
          <CloudButton type="button"><Icon name="cloud" />未上云</CloudButton>
          <CloudButton type="button"><Icon name="user" />协作</CloudButton>
          <CloudButton type="button" $r={8}><Icon name="share" />分享</CloudButton>
          <VSep />
          <MenuDots type="button" aria-label="更多"><Icon name="dots" /></MenuDots>
          <Icon name="chevronUp" />
        </MenuRight>
      </MenuBar>

      <Ribbon>
        <Group $l={13} $r={8} $gap={11}>
          <BigTool type="button"><Icon name="paste" w={23} h={24} /><span>粘贴<Caret /></span></BigTool>
          <Stack>
            <LabelTool type="button"><Icon name="cut" />剪切</LabelTool>
            <LabelTool type="button"><Icon name="copy" />复制</LabelTool>
          </Stack>
          <BigTool type="button"><Icon name="brush" w={24} h={24} />格式刷</BigTool>
          <Launcher />
        </Group>
        <Group>
          <Stack>
            <Row>
              <ComboPair>
                <Combo $w={115}><select aria-label="字体"><option>宋体 (正文)</option></select><Caret /></Combo>
                <Combo $w={78} $size={13}><select aria-label="字号"><option>48</option></select><Caret /></Combo>
              </ComboPair>
              <ToolRow tools={fontRow} />
            </Row>
            <Row><ToolRow tools={fontRow2} /></Row>
          </Stack>
          <Launcher />
        </Group>
        <Group $l={4}>
          <Stack>
            <Row><ToolRow tools={paraRow} /></Row>
            <Row>
              <ToolRow tools={paraRow2} />
              <VSep $h={18} $l={4} $r={3} />
              <Tool icon="spacing" caret />
              <VSep $h={18} $l={4} $r={4} />
              <Tool icon="fill" caret />
              <Tool icon="border" caret />
            </Row>
          </Stack>
          <Launcher />
        </Group>
        <Group $r={6}>
          <StyleBox>
            {styleCards.map((s) => (
              <StyleCard key={s.name} type="button" $size={s.size} $bold={s.bold} $face={s.face} $active={s.active}>
                <b>{s.sample}</b>
                {s.name}
              </StyleCard>
            ))}
            <StyleScroll>
              <button type="button" aria-label="上"><Caret up /></button>
              <button type="button" aria-label="下"><Caret /></button>
              <button type="button" aria-label="更多">
                <svg width="6" height="7" fill="#7c86a0"><path d="M0 0h6v1H0zM0 3h6L3 7z" /></svg>
              </button>
            </StyleScroll>
          </StyleBox>
        </Group>
        <Group $l={10} $r={11}>
          <BigTool type="button"><Icon name="layout" w={24} h={24} /><span>文字排版<Caret /></span></BigTool>
        </Group>
        <Group $l={10} $r={11} $gap={12}>
          <BigTool type="button"><Icon name="find" w={24} h={24} /><span>查找替换<Caret /></span></BigTool>
          <BigTool type="button"><Icon name="pointer" w={24} h={24} /><span>选择<Caret /></span></BigTool>
        </Group>
      </Ribbon>

      <Work>
        <SideRuler>
          <RulerTop><TabMark /><Turned>2</Turned></RulerTop>
          <RulerLit>{range(2, 44).map((n) => <Turned key={n}>{n}</Turned>)}</RulerLit>
          <RulerEnd><Turned>46</Turned><Turned>48</Turned></RulerEnd>
        </SideRuler>
        <Canvas>
          <TopRuler>
            {[6, 4, 2].map((n) => <span key={n}>{n}</span>)}
            <span>
              <svg width="9" height="22" viewBox="0 0 9 22" fill="#fff" stroke="#3f4963">
                <path d="M.5 .5h8v2l-4 4.500-4-4.500zM.5 15.500v-3l4-4.500 4 4.500v3zM.5 15.500h8v6h-8z" />
              </svg>
            </span>
            {range(2, 40).map((n) => <span key={n}>{n}</span>)}
            <RightMark width="15" height="16" viewBox="0 0 15 16" fill="#fff" stroke="#3f4963">
              <path d="M7.500 0v10M3.500 15.500v-2l4-4 4 4v2z" />
            </RightMark>
          </TopRuler>
          <Paper>
            <Crop $at="left: 70px; top: 52px; border-width: 0 1px 1px 0;" />
            <Crop $at="left: 70px; bottom: 52px; border-width: 1px 1px 0 0;" />
            <Crop $at="right: 71px; bottom: 52px; border-width: 1px 0 0 1px;" />
            <ParaHandle>
              <svg width="13" height="16" viewBox="0 0 13 16">
                <path d="M0 0h9l4 4v12H0z" fill="#b9cbe8" />
                <path d="M2 4.500h5M2 7.500h9M2 10.500h3M7 10.500h4M2 13.500h9" stroke="#fff" />
              </svg>
              <Caret color="#b4b7bd" />
            </ParaHandle>
            <p><mark>极光下载站</mark></p>
          </Paper>
        </Canvas>
        <ScrollBar>
          <Icon name="rulerToggle" w={11} h={14} />
          <button type="button" aria-label="上"><Caret up /></button>
          <Thumb />
          <button type="button" aria-label="下"><Caret /></button>
          <button type="button" aria-label="上一页"><Caret up /><Caret up /></button>
          <button type="button" aria-label="选择对象">
            <svg width="6" height="6" fill="none" stroke="#7c86a0"><path d="M.5 .5h5v5h-5z" /></svg>
          </button>
          <button type="button" aria-label="下一页"><Caret /><Caret /></button>
        </ScrollBar>
        <Properties />
        <Strip>
          <Grip />
          {["pen", "cursor", "settings", "store", "bulb", "bookSearch"].map((n) => (
            <StripButton key={n} type="button" aria-label={n} $active={n === "settings"}><Icon name={n} /></StripButton>
          ))}
          <StripEnd><Icon name="moreDots" /></StripEnd>
        </Strip>
      </Work>

      <StatusBar>
        <StatusCell $w={54} $line>页码: 1</StatusCell>
        <StatusCell $w={65} $line>页面: 1/1</StatusCell>
        <StatusCell $w={51}>节: 1/1</StatusCell>
        <StatusCell $w={100} $line>设置值: 2.5厘米</StatusCell>
        <StatusCell $w={37}>行: 1</StatusCell>
        <StatusCell $w={47} $line>列: 1</StatusCell>
        <StatusCell $w={66} $line>字数: 5/5</StatusCell>
        <StatusButton type="button"><Icon name="spell" />拼写检查<Caret /></StatusButton>
        <StatusButton type="button"><Icon name="content" />内容检查<Caret /></StatusButton>
        <StatusRight>
          <Icon name="eye" />
          <VSep $h={14} $l={12} $r={12} />
          <Views>
            {["pageView", "outline", "book", "globe", "edit"].map((n) => (
              <button key={n} type="button" aria-label={n}><Icon name={n} /></button>
            ))}
          </Views>
          <VSep $h={14} $l={10} $r={14} />
          <Icon name="fit" />
          <ZoomSelect type="button">72%<Caret /></ZoomSelect>
          <svg width="10" height="2" fill="#2d3650"><path d="M0 0h10v2H0z" /></svg>
          <ZoomRange type="range" defaultValue="32" aria-label="缩放" />
          <svg width="10" height="10" stroke="#2d3650" strokeWidth="2"><path d="M0 5h10M5 0v10" /></svg>
          <FullButton type="button" aria-label="全屏"><Icon name="full" /></FullButton>
        </StatusRight>
      </StatusBar>

      <FontDialog />
      <RedBox $x={781} $y={217} $w={84} $h={39} />
      <RedBox $x={765} $y={284} $w={67} $h={43} />
      <RedBox $x={964} $y={270} $w={56} $h={50} />
      <RedBox $x={1015} $y={767} $w={104} $h={66} />
      <Meter><i /></Meter>
      <SiteMark>
        <svg width="43" height="42" viewBox="0 0 43 42">
          <defs>
            <linearGradient id="swoosh" x1="1" y1="0" x2="0" y2="1">
              <stop offset="0" stopColor="#5fc8f5" />
              <stop offset="1" stopColor="#4f7fd0" />
            </linearGradient>
            <linearGradient id="leaf" x1="1" y1="0" x2="0" y2="1">
              <stop offset="0" stopColor="#4fc08a" />
              <stop offset=".6" stopColor="#8cd070" />
              <stop offset="1" stopColor="#f3ee5a" />
            </linearGradient>
          </defs>
          <path d="M43 1C22 0 2 9 0 24c0 7 5 10 9 10-5-5-3-12 4-19C21 8 32 4 43 1z" fill="url(#swoosh)" />
          <path d="M19 19c7-4 17-6 22-1 3 10-10 21-32 22 12-3 23-9 25-16 1-5-7-7-15-5z" fill="url(#leaf)" />
          <path d="M24 21c-9-1-16 5-14 10 2 4 11 3 15-2 2-4 0-6-4-5 2 2-1 5-4 5-4-1-1-6 7-8z" fill="#5a8fd6" />
        </svg>
        <div>
          <strong>极光下载站</strong>
          <em>www.xz7.com</em>
        </div>
      </SiteMark>
    </Screen>
  );
}

export default App;
